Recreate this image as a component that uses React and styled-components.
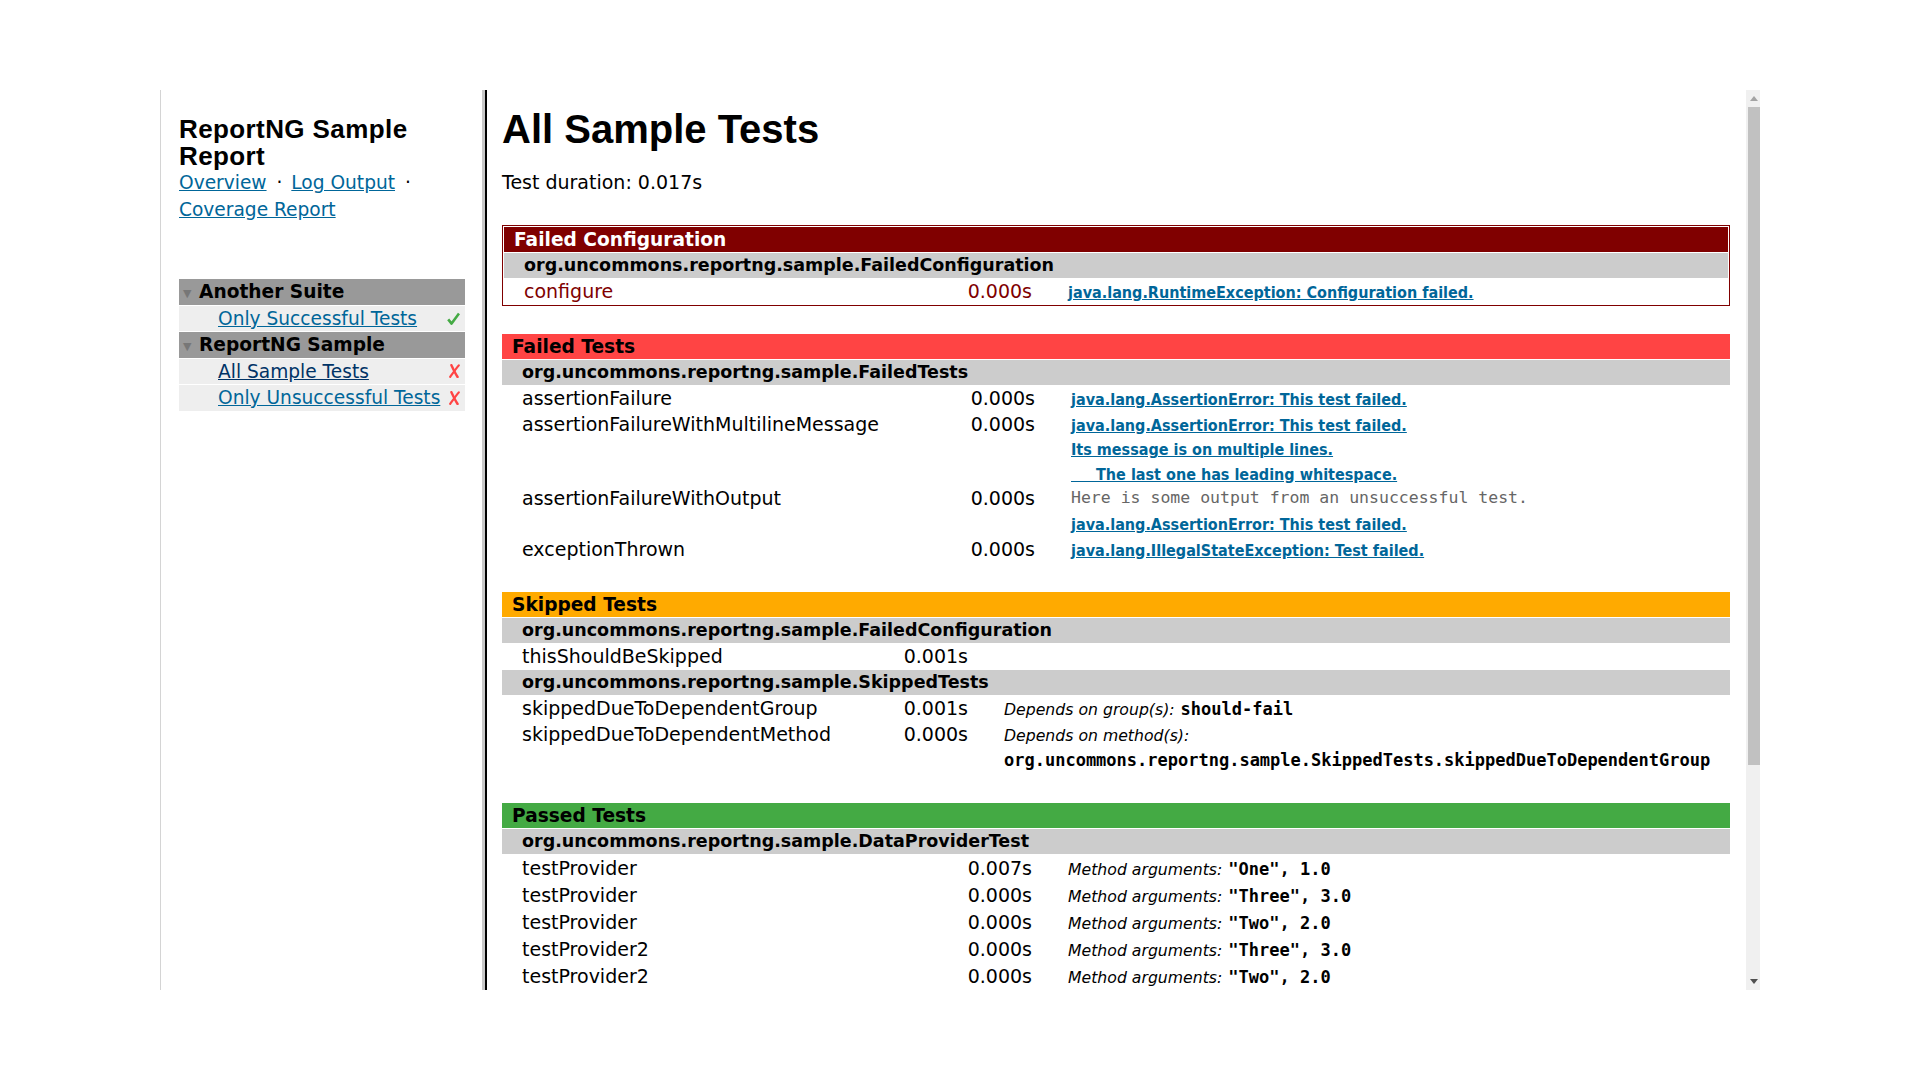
import React from 'react';
import styled, { createGlobalStyle, css } from 'styled-components';

const GlobalStyle = createGlobalStyle`
  html, body {
    margin: 0;
    padding: 0;
    background: #ffffff;
  }
  body {
    font-family: "DejaVu Sans", "Noto Sans", sans-serif;
    font-size: 19px;
    color: #000000;
  }
  a {
    color: #006699;
  }
`;

const Page = styled.div`
  width: 1920px;
  height: 1080px;
  display: flex;
  align-items: center;
  justify-content: center;
`;

const Window = styled.div`
  display: flex;
  width: 1600px;
  height: 900px;
  overflow: hidden;
`;

/* ---------- left frame ---------- */

const Sidebar = styled.nav`
  box-sizing: border-box;
  width: 322px;
  flex-shrink: 0;
  padding: 26px 17px 0 18px;
  border-left: 1px solid #d4d4d4;
  font-size: 18.6px;
`;

const ReportTitle = styled.h1`
  margin: 0;
  font-family: "Liberation Sans", Arial, sans-serif;
  font-weight: bold;
  font-size: 26px;
  letter-spacing: 0.4px;
  line-height: 27px;
`;

const NavLinks = styled.div`
  line-height: 26.5px;
`;

const Sep = styled.span`
  margin: 0 3px 0 4px;
`;

const Suites = styled.div`
  margin-top: 56px;
  display: flex;
  flex-direction: column;
  gap: 1px;
  line-height: 25.5px;
`;

const SuiteHeader = styled.div`
  background: #999999;
  font-weight: bold;
  padding-left: 4px;
`;

const Toggle = styled.span`
  display: inline-block;
  width: 16px;
  font-size: 11px;
  line-height: 1;
  color: #777777;
  vertical-align: 1px;
`;

const SuiteTest = styled.div`
  display: flex;
  align-items: center;
  justify-content: space-between;
  background: #eeeeee;
  padding: 0 5px 0 39px;
  white-space: nowrap;

  a.visited {
    color: #003366;
  }
`;

const Indicator = styled.svg`
  flex-shrink: 0;
  display: block;
`;

const Check = () => (
  <Indicator width="13" height="13" viewBox="0 0 13 13">
    <path d="M1.2 7.4 L4.6 11.6 L12 1.4" fill="none" stroke="#44aa44" strokeWidth="2.6" strokeLinejoin="round" />
  </Indicator>
);

const Cross = () => (
  <Indicator width="11" height="14" viewBox="0 0 11 14">
    <path d="M2.4 1.2 C4.2 5 6.4 9.6 8.6 13" fill="none" stroke="#ff4444" strokeWidth="2.4" strokeLinecap="round" />
    <path d="M9.8 1.4 C6.8 5 4 9 1.2 12.8" fill="none" stroke="#ff4444" strokeWidth="2.2" strokeLinecap="round" />
  </Indicator>
);

/* ---------- frame border ---------- */

const FrameBorder = styled.div`
  box-sizing: border-box;
  width: 5px;
  flex-shrink: 0;
  border-left: 3px solid #c8c8c8;
  border-right: 2px solid #000000;
`;

/* ---------- main frame ---------- */

const Main = styled.main`
  box-sizing: border-box;
  flex: 1;
  min-width: 0;
  height: 900px;
  overflow: hidden;
  padding: 15px 16px 0 15px;
`;

const Title = styled.h1`
  margin: 0;
  font-family: "Liberation Sans", Arial, sans-serif;
  font-weight: bold;
  font-size: 40px;
  line-height: 48px;
`;

const TestDuration = styled.p`
  margin: 17px 0 0;
  line-height: 25px;
`;

const Table = styled.section`
  margin-top: ${p => p.$space}px;
  display: flex;
  flex-direction: column;
  gap: 1px;
  line-height: 25px;

  ${p =>
    p.$config &&
    css`
      border: 1px solid #800000;
      padding: 1px;
      color: #800000;
    `}
`;

const SectionHeader = styled.div`
  background: ${p => p.$bg};
  color: ${p => p.$fg};
  font-weight: bold;
  font-size: 18.6px;
  padding-left: 10px;
`;

const ClassRow = styled.div`
  background: #cccccc;
  color: #000000;
  font-weight: bold;
  font-size: 17.5px;
  padding-left: 20px;
`;

const Row = styled.div`
  display: grid;
  grid-template-columns: ${p => p.$cols};
  line-height: ${p => p.$lh}px;
`;

const Method = styled.div`
  padding-left: 20px;
  white-space: nowrap;
`;

const Time = styled.div`
  text-align: right;
  padding-right: 18px;
`;

const Result = styled.div`
  padding-left: 18px;
  white-space: nowrap;
`;

const ErrorLink = styled.a`
  font-family: "DejaVu Sans Condensed", "DejaVu Sans", sans-serif;
  font-stretch: condensed;
  font-weight: bold;
  font-size: 16px;
  line-height: 1;
  white-space: pre;
`;

const Output = styled.div`
  font-family: "DejaVu Sans Mono", "Liberation Mono", monospace;
  font-size: 16.5px;
  color: #666666;
`;

const Label = styled.i`
  font-size: 15.7px;
  line-height: 1;
`;

const Code = styled.span`
  font-family: "DejaVu Sans Mono", "Liberation Mono", monospace;
  font-weight: bold;
  font-size: 17px;
  line-height: 1;
`;

/* ---------- scrollbar ---------- */

const Scrollbar = styled.div`
  width: 14px;
  flex-shrink: 0;
  display: flex;
  flex-direction: column;
  background: #f0f0f0;
`;

const ScrollButton = styled.div`
  height: 17px;
  display: flex;
  align-items: center;
  justify-content: center;
  padding-left: 2px;
`;

const Track = styled.div`
  flex: 1;
`;

const Thumb = styled.div`
  margin-left: 2px;
  height: 658px;
  background: #c1c1c1;
`;

const Arrow = ({ down, color }) => (
  <svg width="8" height="5" viewBox="0 0 8 5">
    <polygon points={down ? '0,0 8,0 4,5' : '0,5 8,5 4,0'} fill={color} />
  </svg>
);

/* ---------- data ---------- */

const args = (value) => (
  <>
    <Label>Method arguments:</Label> <Code>{value}</Code>
  </>
);

const failLink = (text) => <ErrorLink href="#">{text}</ErrorLink>;

const sections = [
  {
    title: 'Failed Tests',
    bg: '#ff4444',
    cols: '439px 112px 1fr',
    lh: 24.6,
    space: 28,
    groups: [
      {
        name: 'org.uncommons.reportng.sample.FailedTests',
        tests: [
          {
            name: 'assertionFailure',
            time: '0.000s',
            result: failLink('java.lang.AssertionError: This test failed.'),
          },
          {
            name: 'assertionFailureWithMultilineMessage',
            time: '0.000s',
            result: failLink(
              'java.lang.AssertionError: This test failed.\nIts message is on multiple lines.\n     The last one has leading whitespace.'
            ),
          },
          {
            name: 'assertionFailureWithOutput',
            time: '0.000s',
            result: (
              <>
                <Output>Here is some output from an unsuccessful test.</Output>
                {failLink('java.lang.AssertionError: This test failed.')}
              </>
            ),
          },
          {
            name: 'exceptionThrown',
            time: '0.000s',
            result: failLink('java.lang.IllegalStateException: Test failed.'),
          },
        ],
      },
    ],
  },
  {
    title: 'Skipped Tests',
    bg: '#ffaa00',
    cols: '372px 112px 1fr',
    lh: 25,
    space: 31,
    groups: [
      {
        name: 'org.uncommons.reportng.sample.FailedConfiguration',
        tests: [{ name: 'thisShouldBeSkipped', time: '0.001s', result: null }],
      },
      {
        name: 'org.uncommons.reportng.sample.SkippedTests',
        tests: [
          {
            name: 'skippedDueToDependentGroup',
            time: '0.001s',
            result: (
              <>
                <Label>Depends on group(s):</Label> <Code>should-fail</Code>
              </>
            ),
          },
          {
            name: 'skippedDueToDependentMethod',
            time: '0.000s',
            result: (
              <>
                <Label>Depends on method(s):</Label>
                <br />
                <Code>org.uncommons.reportng.sample.SkippedTests.skippedDueToDependentGroup</Code>
              </>
            ),
          },
        ],
      },
    ],
  },
  {
    title: 'Passed Tests',
    bg: '#44aa44',
    cols: '436px 112px 1fr',
    lh: 26,
    space: 31,
    groups: [
      {
        name: 'org.uncommons.reportng.sample.DataProviderTest',
        tests: [
          { name: 'testProvider', time: '0.007s', result: args('"One", 1.0') },
          { name: 'testProvider', time: '0.000s', result: args('"Three", 3.0') },
          { name: 'testProvider', time: '0.000s', result: args('"Two", 2.0') },
          { name: 'testProvider2', time: '0.000s', result: args('"Three", 3.0') },
          { name: 'testProvider2', time: '0.000s', result: args('"Two", 2.0') },
        ],
      },
    ],
  },
];

const App = () => {
  return (
    <Page>
      <GlobalStyle />
      <Window>
        <Sidebar>
          <ReportTitle>ReportNG Sample Report</ReportTitle>
          <NavLinks>
            <a href="#">Overview</a> <Sep>·</Sep> <a href="#">Log Output</a> <Sep>·</Sep>{' '}
            <a href="#">Coverage Report</a>
          </NavLinks>

          <Suites>
            <SuiteHeader>
              <Toggle>▼</Toggle>Another Suite
            </SuiteHeader>
            <SuiteTest>
              <a href="#">Only Successful Tests</a>
              <Check />
            </SuiteTest>
            <SuiteHeader>
              <Toggle>▼</Toggle>ReportNG Sample
            </SuiteHeader>
            <SuiteTest>
              <a href="#" className="visited">All Sample Tests</a>
              <Cross />
            </SuiteTest>
            <SuiteTest>
              <a href="#">Only Unsuccessful Tests</a>
              <Cross />
            </SuiteTest>
          </Suites>
        </Sidebar>

        <FrameBorder />

        <Main>
          <Title>All Sample Tests</Title>
          <TestDuration>Test duration: 0.017s</TestDuration>

          <Table $config $space={30}>
            <SectionHeader $bg="#800000" $fg="#ffffff">Failed Configuration</SectionHeader>
            <ClassRow>org.uncommons.reportng.sample.FailedConfiguration</ClassRow>
            <Row $cols="434px 112px 1fr" $lh={25}>
              <Method>configure</Method>
              <Time>0.000s</Time>
              <Result>{failLink('java.lang.RuntimeException: Configuration failed.')}</Result>
            </Row>
          </Table>

          {sections.map(section => (
            <Table key={section.title} $space={section.space}>
              <SectionHeader $bg={section.bg} $fg="#000000">{section.title}</SectionHeader>
              {section.groups.map(group => (
                <React.Fragment key={group.name}>
                  <ClassRow>{group.name}</ClassRow>
                  {group.tests.map((test, i) => (
                    <Row key={i} $cols={section.cols} $lh={section.lh}>
                      <Method>{test.name}</Method>
                      <Time>{test.time}</Time>
                      <Result>{test.result}</Result>
                    </Row>
                  ))}
                </React.Fragment>
              ))}
            </Table>
          ))}
        </Main>

        <Scrollbar>
          <ScrollButton>
            <Arrow color="#a3a3a3" />
          </ScrollButton>
          <Track>
            <Thumb />
          </Track>
          <ScrollButton>
            <Arrow down color="#505050" />
          </ScrollButton>
        </Scrollbar>
      </Window>
    </Page>
  );
};

export default App;
